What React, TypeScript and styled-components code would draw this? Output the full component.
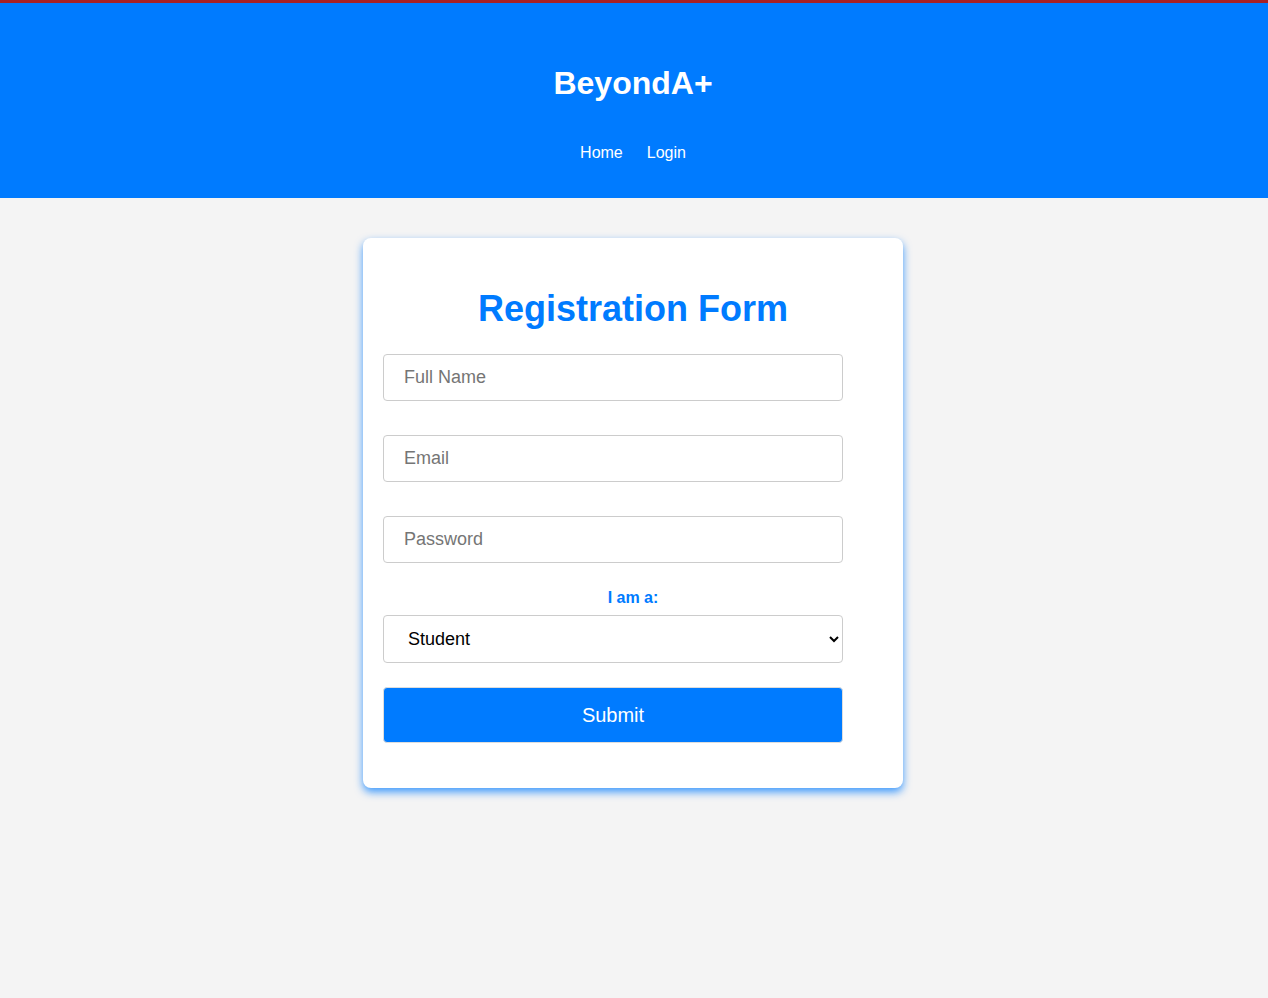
import React, { useState } from "react";
import styled, { createGlobalStyle } from "styled-components";

const GlobalStyle = createGlobalStyle`
  html, body {
    margin: 0;
    padding: 0;
    background: #f4f4f4;
    font-family: "Liberation Sans", Arial, sans-serif;
  }
  * {
    box-sizing: border-box;
  }
`;

const Header = styled.header`
  background: #007bff;
  border-top: 3px solid #a82025;
  color: white;
  display: flex;
  flex-direction: column;
  align-items: center;
  padding: 62px 2px 36px 0;
`;

const Brand = styled.h1`
  margin: 0;
  font-size: 32px;
  line-height: 37px;
  font-weight: bold;
`;

const Nav = styled.nav`
  margin-top: 42px;
  display: flex;
  gap: 24px;
`;

const NavLink = styled.a`
  color: white;
  text-decoration: none;
  font-size: 16px;
  line-height: 18px;
`;

const Main = styled.main`
  display: flex;
  justify-content: center;
  padding: 40px 2px 200px 0;
`;

const Card = styled.form`
  width: 540px;
  background: white;
  border-radius: 8px;
  padding: 20px 20px 45px;
  box-shadow: 0 4px 8px rgba(0, 123, 255, 0.75);
  display: flex;
  flex-direction: column;
`;

const Title = styled.h2`
  margin: 30px 0 25px;
  text-align: center;
  color: #007bff;
  font-size: 36px;
  line-height: 41px;
  font-weight: bold;
`;

const Field = styled.input`
  width: 460px;
  height: 47px;
  padding: 0 20px;
  border: 1px solid #cccccc;
  border-radius: 4px;
  font-size: 18px;
  font-family: "Liberation Sans", Arial, sans-serif;
  color: #222;
  margin-bottom: 34px;
  outline: none;

  &::placeholder {
    color: #757575;
  }

  &:last-of-type {
    margin-bottom: 26px;
  }
`;

const Label = styled.label`
  display: block;
  width: 500px;
  text-align: center;
  color: #007bff;
  font-weight: bold;
  font-size: 16px;
  line-height: 18px;
  margin-bottom: 8px;
`;

const Select = styled.select`
  width: 460px;
  height: 48px;
  padding: 0 20px;
  border: 1px solid #cccccc;
  border-radius: 4px;
  background: white;
  font-size: 18px;
  font-family: "Liberation Sans", Arial, sans-serif;
  color: #000;
  margin-bottom: 24px;
`;

const SubmitButton = styled.button`
  width: 460px;
  height: 56px;
  background: #007bff;
  color: white;
  border: 1px solid #dddddd;
  border-radius: 4px;
  font-size: 20px;
  font-family: "Liberation Sans", Arial, sans-serif;
  cursor: pointer;
`;

const App: React.FC = () => {
  const [role, setRole] = useState("student");

  return (
    <>
      <GlobalStyle />
      <Header>
        <Brand>BeyondA+</Brand>
        <Nav>
          <NavLink href="#">Home</NavLink>
          <NavLink href="#">Login</NavLink>
        </Nav>
      </Header>
      <Main>
        <Card onSubmit={(e) => e.preventDefault()}>
          <Title>Registration Form</Title>
          <Field type="text" placeholder="Full Name" />
          <Field type="email" placeholder="Email" />
          <Field type="password" placeholder="Password" />
          <Label htmlFor="role">I am a:</Label>
          <Select id="role" value={role} onChange={(e) => setRole(e.target.value)}>
            <option value="student">Student</option>
            <option value="teacher">Teacher</option>
          </Select>
          <SubmitButton type="submit">Submit</SubmitButton>
        </Card>
      </Main>
    </>
  );
};

export default App;
